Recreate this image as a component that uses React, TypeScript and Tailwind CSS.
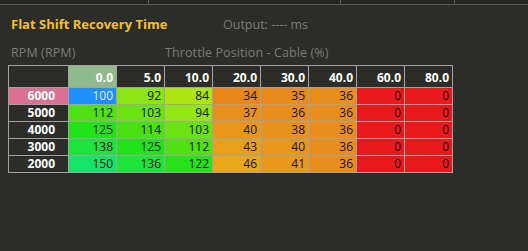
import React from "react";

const cols = ["0.0", "5.0", "10.0", "20.0", "30.0", "40.0", "60.0", "80.0"];

type Cell = { v: number; bg: string; light?: boolean };

const rows: { rpm: string; hl?: boolean; cells: Cell[] }[] = [
  {
    rpm: "6000",
    hl: true,
    cells: [
      { v: 100, bg: "#1e90ff", light: true },
      { v: 92, bg: "#8be514" },
      { v: 84, bg: "#ace511" },
      { v: 34, bg: "#e8861a" },
      { v: 35, bg: "#e98a1b" },
      { v: 36, bg: "#e98d1c" },
      { v: 0, bg: "#e8181b" },
      { v: 0, bg: "#e8181b" },
    ],
  },
  {
    rpm: "5000",
    cells: [
      { v: 112, bg: "#4fe113" },
      { v: 103, bg: "#6be313" },
      { v: 94, bg: "#93e612" },
      { v: 37, bg: "#e98f1b" },
      { v: 36, bg: "#e98d1c" },
      { v: 36, bg: "#e98d1c" },
      { v: 0, bg: "#e8181b" },
      { v: 0, bg: "#e8181b" },
    ],
  },
  {
    rpm: "4000",
    cells: [
      { v: 125, bg: "#22e31a" },
      { v: 114, bg: "#4ae113" },
      { v: 103, bg: "#6be313" },
      { v: 40, bg: "#e9971a" },
      { v: 38, bg: "#e9921b" },
      { v: 36, bg: "#e98d1c" },
      { v: 0, bg: "#e8181b" },
      { v: 0, bg: "#e8181b" },
    ],
  },
  {
    rpm: "3000",
    cells: [
      { v: 138, bg: "#1de43c" },
      { v: 125, bg: "#22e31a" },
      { v: 112, bg: "#4fe113" },
      { v: 43, bg: "#e8a01a" },
      { v: 40, bg: "#e9971a" },
      { v: 36, bg: "#e98d1c" },
      { v: 0, bg: "#e8181b" },
      { v: 0, bg: "#e8181b" },
    ],
  },
  {
    rpm: "2000",
    cells: [
      { v: 150, bg: "#16e46a" },
      { v: 136, bg: "#1de43a" },
      { v: 122, bg: "#28e31a" },
      { v: 46, bg: "#e8a81a" },
      { v: 41, bg: "#e9991a" },
      { v: 36, bg: "#e98d1c" },
      { v: 0, bg: "#e8181b" },
      { v: 0, bg: "#e8181b" },
    ],
  },
];

export default function App() {
  return (
    <div
      className="w-[528px] h-[251px] bg-[#2c2c28] overflow-hidden flex flex-col"
      style={{ fontFamily: '"Open Sans", "Noto Sans", sans-serif' }}
    >
      {/* toolbar strip above the panel */}
      <div className="h-[4px] bg-[#252523] flex">
        <div className="w-[148px]" />
        <div className="w-px bg-[#5a5a58]" />
        <div className="w-[191px]" />
        <div className="w-px bg-[#5a5a58]" />
        <div className="w-[113px]" />
        <div className="w-px bg-[#5a5a58]" />
      </div>
      <div className="h-px bg-[#5a5a58]" />

      <div className="flex items-baseline pl-[11px] pt-[10px] h-[24px]">
        <span className="w-[212px] text-[13px] font-bold text-[#f5c02a]">
          Flat Shift Recovery Time
        </span>
        <span className="text-[12.5px] text-[#7c7c78]">Output: ---- ms</span>
      </div>

      <div className="flex items-baseline pl-[11px] pt-[15px] h-[29px]">
        <span className="w-[154px] text-[12.5px] text-[#7c7c78] tracking-[0.1px]">RPM (RPM)</span>
        <span className="text-[12.5px] text-[#7c7c78] tracking-[0.1px]">
          Throttle Position - Cable (%)
        </span>
      </div>

      <div className="pl-[8px] pt-[7px]">
        <div className="grid grid-cols-[59px_repeat(8,47px)] grid-rows-[21px_repeat(5,16px)] gap-px bg-[#a3a3a3] p-px w-max text-[12px] leading-none">
          <div className="bg-[#2c2c28]" />
          {cols.map((c, i) => (
            <div
              key={c}
              className={`flex items-center justify-end pr-[3px] pt-[2px] font-bold text-white ${
                i === 0 ? "bg-[#8fbb8c]" : "bg-[#2c2c28]"
              }`}
            >
              {c}
            </div>
          ))}
          {rows.map((r) => (
            <React.Fragment key={r.rpm}>
              <div
                className={`flex items-center justify-end pr-[13px] font-bold text-white ${
                  r.hl ? "bg-[#db7092]" : "bg-[#2c2c28]"
                }`}
              >
                {r.rpm}
              </div>
              {r.cells.map((c, j) => (
                <div
                  key={j}
                  className={`flex items-center justify-end pr-[3px] ${
                    c.light ? "text-[#e8ecff]" : "text-[#111]"
                  }`}
                  style={{ backgroundColor: c.bg }}
                >
                  {c.v}
                </div>
              ))}
            </React.Fragment>
          ))}
        </div>
      </div>
    </div>
  );
}
